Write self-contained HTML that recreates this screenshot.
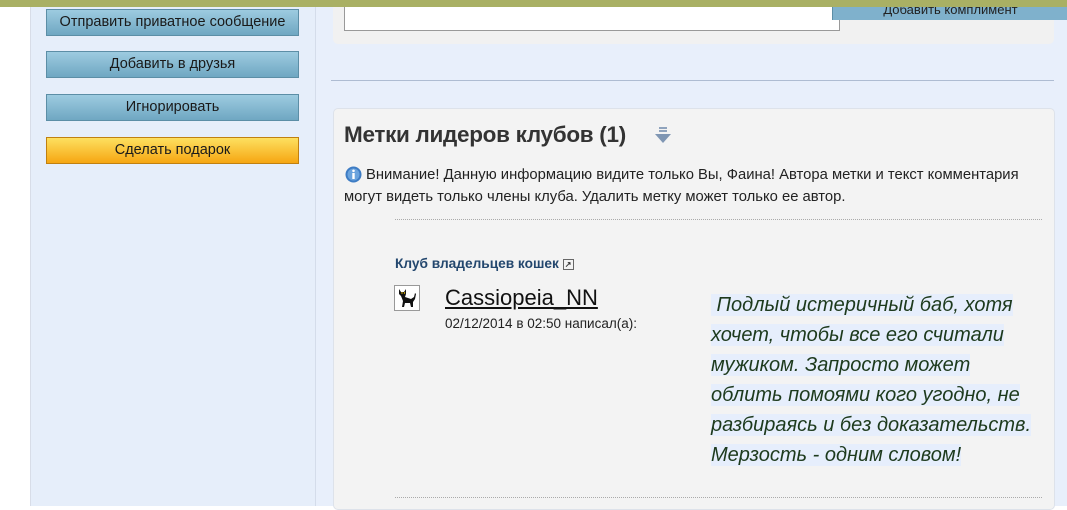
<!DOCTYPE html>
<html><head><meta charset="utf-8"><style>
body{margin:0;width:1067px;height:506px;overflow:hidden;background:#fff;font-family:"Liberation Sans",Arial,sans-serif;position:relative}
.a{position:absolute}
.btn{position:absolute;left:46px;width:251px;height:25px;border:1px solid #5c8ea6;background:linear-gradient(#9dcbe0,#6fa7c2);color:#1a1a1a;font-size:14.5px;text-align:center;line-height:25px}
.gift{background:linear-gradient(#fde060,#f6a612);border-color:#c08010}
.line{background:#e6eefc;white-space:nowrap}
</style></head><body>
<div class="a" style="left:0;top:0;width:1067px;height:7px;background:#a9b064"></div>
<div class="a" style="left:30px;top:7px;width:1px;height:499px;background:#d8dde8"></div>
<div class="a" style="left:31px;top:7px;width:284px;height:499px;background:#e6eefa"></div>
<div class="a" style="left:315px;top:7px;width:1px;height:499px;background:#d4dcea"></div>
<div class="a" style="left:316px;top:7px;width:751px;height:499px;background:#e8effb"></div>
<div class="btn" style="top:9px">Отправить приватное сообщение</div>
<div class="btn" style="top:51px">Добавить в друзья</div>
<div class="btn" style="top:94px">Игнорировать</div>
<div class="btn gift" style="top:137px">Сделать подарок</div>
<div class="a" style="left:333px;top:7px;width:721px;height:37px;background:#f1f1f1;border-radius:0 0 5px 5px"></div>
<div class="a" style="left:344px;top:7px;width:494px;height:23px;background:#fff;border:1px solid #999;border-top:none"></div>
<div class="a" style="left:832px;top:7px;width:235px;height:13px;background:#7fb1cc;border-left:1px solid #5c8ea6;font-size:13px;line-height:6px;text-align:center;overflow:hidden;color:#222">Добавить комплимент</div>
<div class="a" style="left:331px;top:80px;width:723px;height:1px;background:#aebcd2"></div>
<div class="a" style="left:333px;top:108px;width:720px;height:400px;background:#f3f3f3;border:1px solid #dde2ea;border-radius:5px"></div>
<div class="a" style="left:344px;top:122px;font-size:22.5px;font-weight:bold;color:#333;letter-spacing:-0.3px">Метки лидеров клубов (1)</div>
<svg class="a" style="left:653px;top:126px" width="20" height="20"><rect x="6" y="1" width="8" height="2" fill="#8fa3bd"/><rect x="6" y="4" width="8" height="2" fill="#8fa3bd"/><path d="M2 8h16l-8 9z" fill="#7f96b3"/></svg>
<svg class="a" style="left:345px;top:166px" width="17" height="17"><circle cx="8.5" cy="8.5" r="8" fill="#3d7cc4"/><circle cx="8.5" cy="8.5" r="6" fill="#6aa3dd"/><rect x="7.3" y="7" width="2.4" height="6" fill="#fff"/><circle cx="8.5" cy="4.8" r="1.3" fill="#fff"/></svg>
<div class="a" style="left:366px;top:164px;font-size:14.8px;color:#222;line-height:22px;white-space:nowrap">Внимание! Данную информацию видите только Вы, Фаина! Автора метки и текст комментария</div>
<div class="a" style="left:344px;top:186px;font-size:14.8px;color:#222;line-height:22px;white-space:nowrap">могут видеть только члены клуба. Удалить метку может только ее автор.</div>
<div class="a" style="left:395px;top:219px;width:647px;border-top:1px dotted #aaa"></div>
<div class="a" style="left:395px;top:256px;font-size:13.7px;font-weight:bold;color:#23476e">Клуб владельцев кошек <span style="display:inline-block;width:9px;height:9px;border:1px solid #666;font-size:8px;line-height:9px;vertical-align:middle;text-align:center;color:#333">↗</span></div>
<svg class="a" style="left:394px;top:285px" width="26" height="26"><rect x="0.5" y="0.5" width="25" height="25" fill="#fff" stroke="#999"/><path d="M5 4l2 3h3l2-3v5l-1 3 6 2 3-2 1-4 1 1-1 5-2 3v5h-2l-1-4h-5l-1 4H8l1-6-2-5-2-2z" fill="#111"/><circle cx="8" cy="8" r="0.7" fill="#fc0"/><circle cx="10.5" cy="8" r="0.7" fill="#fc0"/></svg>
<div class="a" style="left:445px;top:285px;font-size:22px;color:#111;text-decoration:underline">Cassiopeia_NN</div>
<div class="a" style="left:445px;top:316px;font-size:13.5px;color:#222">02/12/2014 в 02:50 написал(а):</div>
<div class="a" style="left:711px;top:290px;font-size:20px;font-style:italic;line-height:30px;color:#1d3a1d">
<span class="line">&nbsp;Подлый истеричный баб, хотя</span><br>
<span class="line">хочет, чтобы все его считали</span><br>
<span class="line">мужиком. Запросто может</span><br>
<span class="line">облить помоями кого угодно, не</span><br>
<span class="line">разбираясь и без доказательств.</span><br>
<span class="line">Мерзость - одним словом!</span></div>
<div class="a" style="left:395px;top:497px;width:647px;border-top:1px dotted #aaa"></div>
</body></html>
